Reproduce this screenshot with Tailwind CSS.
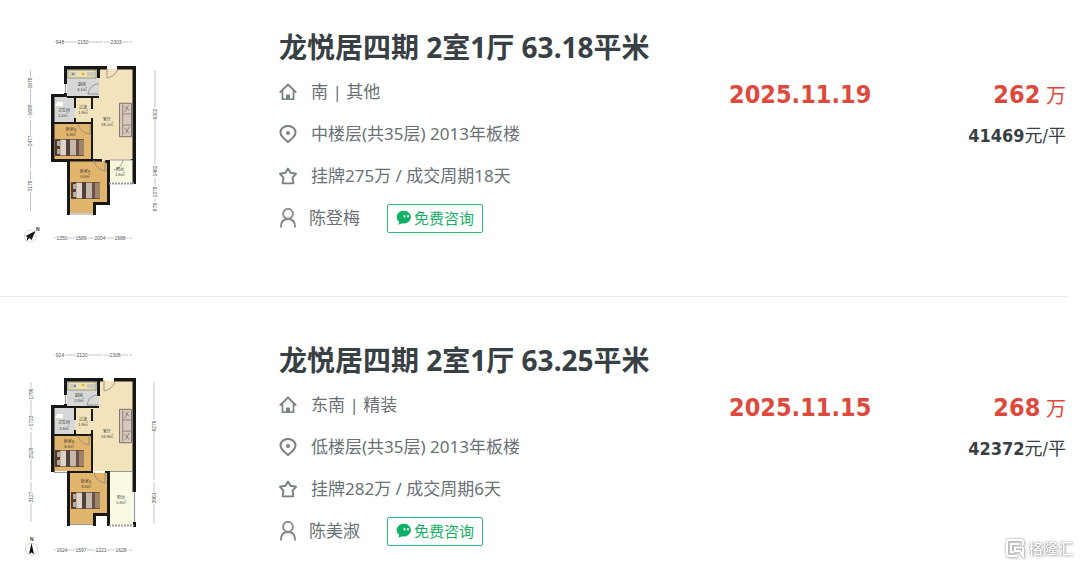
<!DOCTYPE html>
<html lang="zh-CN">
<head>
    <meta charset="UTF-8">
    <meta name="viewport" content="width=device-width, initial-scale=1.0">
    <title>龙悦居四期 成交记录</title>
    <script src="https://cdn.jsdelivr.net/npm/@tailwindcss/browser@4"></script>
</head>
<body class="relative bg-white font-['Noto_Sans','Noto_Sans_CJK_SC',sans-serif] text-[#6a7175]">
    <!-- 图标与户型图公用部件 -->
    <svg class="hidden">
        <symbol id="home" viewBox="0 0 18 18"><path d="M.8 9.500 9 1.500l8.200 8M3.500 8v8.200h3.300M14.500 8v8.200h-3.300" fill="none" stroke="#7b8184" stroke-width="1.800"/><path d="M7 11.500h4V17H7z" fill="#7b8184"/></symbol>
        <symbol id="pin" viewBox="0 0 18 18"><path d="M9 17C6 14.600 1.500 11.500 1.500 7.600A7.500 6.700 0 0 1 16.500 7.600C16.500 11.500 12 14.600 9 17z" fill="none" stroke="#7b8184" stroke-width="2"/><circle cx="9" cy="8" r="2" fill="#7b8184"/></symbol>
        <symbol id="star" viewBox="0 0 18 18"><path d="M9 1.500l2.500 4.300 5.500 1-3.500 3.900.9 5.700H3.600l.9-5.700L1 6.800l5.500-1z" fill="none" stroke="#7b8184" stroke-width="1.900" stroke-linejoin="round"/></symbol>
        <symbol id="user" viewBox="0 0 18 20"><circle cx="9" cy="5.800" r="4.900" fill="none" stroke="#858a8d" stroke-width="1.900"/><path d="M1.800 19.500c0-5.500 2.500-8.500 7.200-8.500s7.200 3 7.200 8.500" fill="none" stroke="#858a8d" stroke-width="1.900"/></symbol>
        <symbol id="chat" viewBox="0 0 16 16"><path d="M8 .8a7.200 6.300 0 1 1-1.500 12.500L2.500 14.800l.6-3A7.200 6.300 0 0 1 8 .8z" fill="#0fb264"/><ellipse cx="8.500" cy="6.300" rx=".9" ry="1.400" fill="#fff"/><ellipse cx="12" cy="6.300" rx=".9" ry="1.400" fill="#fff"/></symbol>
        <symbol id="bed" viewBox="0 0 30 17"><path d="M0 0h5v17H0z" fill="#4e3b35"/><path d="M2 2h4v5H2zM2 10h4v5H2z" fill="#b9aaa1"/><path d="M6 0h5v17H6z" fill="#ddd4cc"/><path d="M11 0h4v17h-4z" fill="#514039"/><path d="M15 0h6v17h-6z" fill="#c6b7ab"/><path d="M21 0h3v17h-3z" fill="#67534a"/><path d="M24 0h5v17h-5z" fill="#a08468"/><path d="M0 .4h29M0 16.600h29" stroke="#5e4738" stroke-width=".8"/></symbol>
        <symbol id="sofa" viewBox="0 0 14 37"><path d="M.5 .5h13v36H.5z" fill="#d6c8bd" stroke="#786860"/><path d="M4 2v33M4 12h9M4 24h9" stroke="#8e7d74" fill="none"/><path d="M6 4l5 4M10 3l-4 7M6 27l5 6M11 26l-4 7" stroke="#7b6a62" stroke-width=".8"/></symbol>
    </svg>

    <main class="mr-3">
        <!-- 第一套 -->
        <article class="flex border-b border-[#ececec] pt-[27px] pb-11">
            <div class="w-[279px] shrink-0 pl-[15px]">
                <svg class="h-[225px] w-[160px]" viewBox="15 27 160 225" role="img" aria-label="户型图">
                    <path d="M99 69h34v91H92v-37H75V98h24z" fill="#f3e3bc"/>
                    <path d="M67 69h32v28H67zM54 97h21v26H54z" fill="#d6d8d7"/>
                    <path d="M68 70h28v8H68z" fill="#ece1b3" stroke="#807b68" stroke-width=".7"/>
                    <path d="M70 72h6v4h-6zM87 72h8v4h-8z" fill="#c9c7bd"/><path d="M72 74h2" stroke="#444"/><circle cx="83" cy="74" r="1.500" fill="#dcb43d"/>
                    <path d="M57 102h6v4h-8z" fill="#fff"/>
                    <path d="M54 124h38v35H54zM70 161h37v41H93v11H70z" fill="#e2b56c"/>
                    <path d="M110 161h23v21h-23z" fill="#f8f8df"/>
                    <path d="M64 66h43v3.500H67V84h-3zM117 66h19v118h-3.500v-24h-2v-1h2V69.500H117zM64 93h3v4H54.500v62H102v2.500H70V215h-3v-53H51V94h13zM67 96h32v2H67zM97 69h3v9h-3zM74 97h2v11h-2zM74 118h2v4h15v-4h2v42h-2v-36H54v-2h20zM91 98h2v11h-2zM105 160h5v45H96v10h-3v-13h14v-39h-2z" fill="#171716"/>
                    <path d="M65.500 84v9M70 214h23M110 160h22" stroke="#999" stroke-width="1.200"/>
                    <path d="M109 183.500h25" stroke="#999" stroke-width="2" stroke-dasharray="2 1"/>
                    <path d="M107 68v10c5-1 9-4 11-9M99 84c-6 0-10 4-11 10h11M78 124c1 5 5 9 12 10v-10M94 160c1 6 5 10 11 11v-11M123 160c-1 5-4 9-9 10" fill="none" stroke="#898779" stroke-width=".8"/>
                    <use href="#bed" x="55" y="139" width="30" height="17"/>
                    <use href="#bed" x="71" y="182" width="30" height="17"/>
                    <use href="#sofa" x="119" y="102" width="13" height="36"/>
                    <g class="font-['Noto_Sans_CJK_SC',sans-serif] text-[4px]" fill="#3d3a35" text-anchor="middle">
                        <text x="82" y="86">厨房</text><text x="82" y="91">4.1㎡</text>
                        <text x="64" y="112">卫生间</text><text x="63" y="117">2.2㎡</text>
                        <text x="83" y="109">过道</text><text x="83" y="114">1.9㎡</text>
                        <text x="107" y="121">客厅</text><text x="107" y="126">19.1㎡</text>
                        <text x="71" y="131">卧室B</text><text x="71" y="136">6.4㎡</text>
                        <text x="85" y="173">卧室A</text><text x="85" y="178">8.0㎡</text>
                        <text x="120" y="171">阳台</text><text x="120" y="176">2.6㎡</text>
                    </g>
                    <g stroke="#b5b5b5" stroke-width=".8" fill="none">
                        <path d="M54 42h78M54 238h78" stroke-dasharray="24 1"/>
                        <path d="M30.500 70v141M155 70v141" stroke-dasharray="48 2"/>
                    </g>
                    <g class="font-['Liberation_Sans',sans-serif] text-[5px]" fill="#555" stroke="#fff" stroke-width="2" paint-order="stroke" text-anchor="middle">
                        <text x="60" y="44">948</text><text x="83" y="44">2150</text><text x="116" y="44">2303</text>
                        <text x="62" y="240">1350</text><text x="81" y="240">1589</text><text x="100" y="240">2004</text><text x="120" y="240">1688</text>
                        <text transform="translate(32 83) rotate(-90)">1678</text><text transform="translate(32 110) rotate(-90)">1689</text><text transform="translate(32 141) rotate(-90)">2477</text><text transform="translate(32 186) rotate(-90)">3176</text>
                        <text transform="translate(157 114) rotate(-90)">6302</text><text transform="translate(157 171) rotate(-90)">1462</text><text transform="translate(157 192) rotate(-90)">1378</text><text transform="translate(157 207) rotate(-90)">876</text>
                    </g>
                    <circle cx="30.500" cy="236" r="6" fill="#fff" stroke="#ccc" stroke-width=".8"/>
                    <path d="M35.500 231l-4 9-2-2-3 3 1-4-2-1z" fill="#111"/>
                    <text x="36" y="231" class="font-['Liberation_Sans',sans-serif] text-[5px] font-bold" fill="#333">N</text>
                </svg>
            </div>
            <div class="grow">
                <h2 class="mb-1 text-[28px] leading-10 font-bold text-[#394043]">龙悦居四期 2室1厅 63.18平米</h2>
                <div class="flex h-[42px] items-center gap-[14px] text-[17px]"><svg class="size-[18px]"><use href="#home"/></svg>南 | 其他</div>
                <div class="flex h-[42px] items-center gap-[14px] text-[17px]"><svg class="size-[18px]"><use href="#pin"/></svg>中楼层(共35层) 2013年板楼</div>
                <div class="flex h-[42px] items-center gap-[14px] text-[17px]"><svg class="size-[18px]"><use href="#star"/></svg>挂牌275万 / 成交周期18天</div>
                <div class="flex h-[42px] items-center gap-3 text-[17px]">
                    <svg class="h-5 w-[18px]"><use href="#user"/></svg>陈登梅
                    <button class="ml-[15px] flex h-[29px] w-24 items-center justify-center gap-0.5 rounded-xs border border-[#2fba78] text-[15px] text-[#12b066]"><svg class="size-4"><use href="#chat"/></svg>免费咨询</button>
                </div>
            </div>
            <div class="w-48 shrink-0 pt-[50px] font-['DejaVu_Sans_Condensed','DejaVu_Sans',sans-serif] text-[25px] leading-9 font-bold text-[#dd4a3d]">2025.11.19</div>
            <div class="w-[147px] shrink-0 pt-[50px] pr-0.5 text-right font-['DejaVu_Sans_Condensed','Noto_Sans_CJK_SC',sans-serif]">
                <p class="text-xl leading-9 text-[#dd4a3d]"><b class="text-[25px]">262</b> 万</p>
                <p class="mt-1 text-lg leading-9 text-[#394043]"><b>41469</b>元/平</p>
            </div>
        </article>

        <!-- 第二套 -->
        <article class="flex pt-[43px]">
            <div class="w-[279px] shrink-0 pl-[15px]">
                <svg class="h-[225px] w-[160px]" viewBox="15 340 160 225" role="img" aria-label="户型图">
                    <path d="M99 381h34v90H92v-36H75v-27h24z" fill="#f3e3bc"/>
                    <path d="M67 381h32v26H67zM54 408h21v26H54z" fill="#d6d8d7"/>
                    <path d="M68 382h28v8H68z" fill="#ece1b3" stroke="#807b68" stroke-width=".7"/>
                    <path d="M70 384h6v4h-6zM87 384h8v4h-8z" fill="#c9c7bd"/><path d="M74 386h2" stroke="#444"/><circle cx="83" cy="385" r="1.500" fill="#dcb43d"/>
                    <path d="M57 414h6v4h-8z" fill="#fff"/>
                    <path d="M54 436h38v35H54zM70 473h37v40H93v11H70z" fill="#e2b56c"/>
                    <path d="M110 472h23v52h-23z" fill="#fafae3"/>
                    <path d="M64 378h39v3.500H67V395h-3zM114 378h22v114h-3.500V381.500H114zM64 404h3v4H54.500v64H51v-67h13zM67 406h32v2H67zM97 381h3v15h-3zM74 408h2v12h-2zM74 430h2v4h15v-4h2v42h-2v-36H54v-2h20zM91 409h2v12h-2zM68 471h25v2H70v53h-3v-55zM105 471h5v55h-3v-10H96v10h-3v-13h14v-40h-2zM133 522h3v5h-3z" fill="#171716"/>
                    <path d="M65.500 395v9M54 472.500h13M70 524.500h23M110 471.500h22M134.500 492v30" stroke="#999" stroke-width="1.200"/>
                    <path d="M109 525.500h25" stroke="#999" stroke-width="2" stroke-dasharray="2 1"/>
                    <path d="M104 380v11c5-1 9-4 11-9M98 395c-6 0-10 4-11 10h11M78 435c1 5 5 9 11 10v-10M94 472c1 6 5 10 11 11v-11" fill="none" stroke="#898779" stroke-width=".8"/>
                    <use href="#bed" x="55" y="450" width="30" height="17"/>
                    <use href="#bed" x="71" y="492" width="30" height="17"/>
                    <use href="#sofa" x="119" y="408" width="13" height="36"/>
                    <g class="font-['Noto_Sans_CJK_SC',sans-serif] text-[4px]" fill="#3d3a35" text-anchor="middle">
                        <text x="79" y="397">厨房</text><text x="79" y="402">3.8㎡</text>
                        <text x="64" y="424">卫生间</text><text x="64" y="430">2.4㎡</text>
                        <text x="83" y="421">过道</text><text x="83" y="426">1.9㎡</text>
                        <text x="107" y="433">客厅</text><text x="107" y="438">18.9㎡</text>
                        <text x="69" y="443">卧室B</text><text x="69" y="448">6.4㎡</text>
                        <text x="86" y="483">卧室A</text><text x="86" y="488">8.0㎡</text>
                        <text x="121" y="499">阳台</text><text x="121" y="504">5.8㎡</text>
                    </g>
                    <g stroke="#b5b5b5" stroke-width=".8" fill="none">
                        <path d="M54 355h78M54 550h78" stroke-dasharray="24 1"/>
                        <path d="M31 382v140M154 382v142" stroke-dasharray="48 2"/>
                    </g>
                    <g class="font-['Liberation_Sans',sans-serif] text-[5px]" fill="#555" stroke="#fff" stroke-width="2" paint-order="stroke" text-anchor="middle">
                        <text x="60" y="357">924</text><text x="82" y="357">2120</text><text x="115" y="357">2308</text>
                        <text x="62" y="552">1624</text><text x="81" y="552">1597</text><text x="101" y="552">1221</text><text x="121" y="552">1628</text>
                        <text transform="translate(33 394) rotate(-90)">1796</text><text transform="translate(33 421) rotate(-90)">1723</text><text transform="translate(33 453) rotate(-90)">2529</text><text transform="translate(33 497) rotate(-90)">3127</text>
                        <text transform="translate(156 426) rotate(-90)">6276</text><text transform="translate(156 498) rotate(-90)">3961</text>
                    </g>
                    <circle cx="31.500" cy="549" r="6" fill="#fff" stroke="#ccc" stroke-width=".8"/>
                    <path d="M31.500 543l2.500 11-2.500-1.500-2.500 1.500z" fill="#111"/>
                    <text x="30" y="541" class="font-['Liberation_Sans',sans-serif] text-[5px] font-bold" fill="#333">N</text>
                </svg>
            </div>
            <div class="grow">
                <h2 class="mb-1 text-[28px] leading-10 font-bold text-[#394043]">龙悦居四期 2室1厅 63.25平米</h2>
                <div class="flex h-[42px] items-center gap-[14px] text-[17px]"><svg class="size-[18px]"><use href="#home"/></svg>东南 | 精装</div>
                <div class="flex h-[42px] items-center gap-[14px] text-[17px]"><svg class="size-[18px]"><use href="#pin"/></svg>低楼层(共35层) 2013年板楼</div>
                <div class="flex h-[42px] items-center gap-[14px] text-[17px]"><svg class="size-[18px]"><use href="#star"/></svg>挂牌282万 / 成交周期6天</div>
                <div class="flex h-[42px] items-center gap-3 text-[17px]">
                    <svg class="h-5 w-[18px]"><use href="#user"/></svg>陈美淑
                    <button class="ml-[15px] flex h-[29px] w-24 items-center justify-center gap-0.5 rounded-xs border border-[#2fba78] text-[15px] text-[#12b066]"><svg class="size-4"><use href="#chat"/></svg>免费咨询</button>
                </div>
            </div>
            <div class="w-48 shrink-0 pt-[50px] font-['DejaVu_Sans_Condensed','DejaVu_Sans',sans-serif] text-[25px] leading-9 font-bold text-[#dd4a3d]">2025.11.15</div>
            <div class="w-[147px] shrink-0 pt-[50px] pr-0.5 text-right font-['DejaVu_Sans_Condensed','Noto_Sans_CJK_SC',sans-serif]">
                <p class="text-xl leading-9 text-[#dd4a3d]"><b class="text-[25px]">268</b> 万</p>
                <p class="mt-1 text-lg leading-9 text-[#394043]"><b>42372</b>元/平</p>
            </div>
        </article>
    </main>

    <!-- 水印 -->
    <div class="absolute right-[7px] bottom-[5px] flex items-center gap-[3px] text-[15px] leading-6 text-white [filter:drop-shadow(0_0_1px_#999)_drop-shadow(1px_1px_1px_#ccc)]">
        <svg class="size-5" viewBox="0 0 20 20"><path d="M18 7V4a2 2 0 0 0-2-2H4a2 2 0 0 0-2 2v12a2 2 0 0 0 2 2h8M18 9.500h-8v3.500h5l3 5V9.500M14 6H6v8h3" fill="none" stroke="#fff" stroke-width="2"/></svg>格隆汇
    </div>
</body>
</html>
